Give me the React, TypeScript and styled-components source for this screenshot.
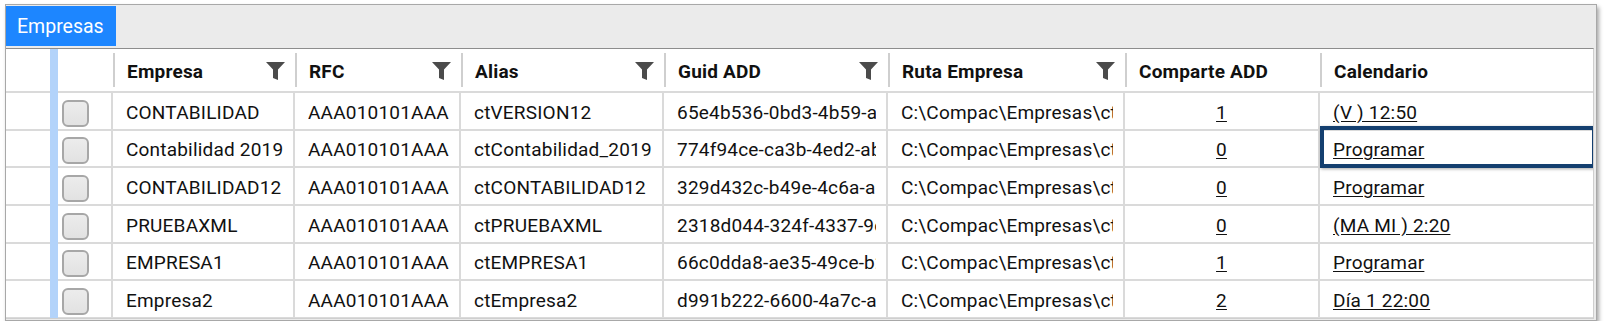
import React from 'react';
import styled, { createGlobalStyle, css } from 'styled-components';

const GlobalStyle = createGlobalStyle`
  html, body {
    margin: 0;
    padding: 0;
    background: #ffffff;
  }
  body {
    font-family: Roboto, "Liberation Sans", Arial, sans-serif;
    color: #111111;
  }
`;

const Frame = styled.div`
  box-sizing: border-box;
  margin: 4px 0 0 5px;
  width: 1592px;
  height: 317px;
  background: #ebebeb;
  border: 1px solid #a8a8a8;
  box-shadow: 2px 3px 4px rgba(0, 0, 0, 0.35);
  display: flex;
  flex-direction: column;
`;

const TabBar = styled.div`
  height: 43px;
  flex: none;
  display: flex;
  align-items: flex-start;
`;

const Tab = styled.div`
  margin-top: 1px;
  height: 40px;
  padding: 0 12px 0 11px;
  display: flex;
  align-items: center;
  background: #1d86ff;
  color: #ffffff;
  font-size: 19.5px;
`;

const GridWrap = styled.div`
  flex: 1;
  min-height: 0;
  margin: 0 2px 1px 0;
  background: #ffffff;
  border-top: 1px solid #8d8d8d;
  border-right: 1px solid #cfcfcf;
  border-bottom: 1px solid #cfcfcf;
  overflow: hidden;
`;

const Table = styled.table`
  table-layout: fixed;
  border-collapse: separate;
  border-spacing: 0;
  width: 1587px;
  font-size: 19px;
  letter-spacing: 0.2px;
`;

const HeadRow = styled.tr`
  height: 44px;
`;

const BodyRow = styled.tr`
  height: 37.67px;
`;

const Th = styled.th<{ $bar?: boolean }>`
  padding: 0;
  text-align: left;
  font-weight: 700;
  border-bottom: 2px solid ${p => (p.$bar ? '#b3d3fa' : '#dadada')};
  background: ${p => (p.$bar ? '#b3d3fa' : '#ffffff')};
`;

const HeadInner = styled.div`
  height: 32px;
  display: flex;
  align-items: center;
  justify-content: space-between;
  border-left: 2px solid #cfcfcf;
  padding: 2px 10px 0 12px;
  white-space: nowrap;
  overflow: hidden;
`;

const Td = styled.td<{ $kind?: 'plain' | 'bar' | 'check' | 'center'; $selected?: boolean }>`
  padding: 3px 10px 0 13px;
  border-bottom: 2px solid #dadada;
  border-right: 2px solid #dadada;
  vertical-align: middle;
  ${p =>
    p.$kind === 'plain' &&
    css`
      border-right: none;
      padding: 0;
    `}
  ${p =>
    p.$kind === 'bar' &&
    css`
      padding: 0;
      border-right: none;
      background: #b3d3fa;
      border-bottom-color: #b3d3fa;
    `}
  ${p =>
    p.$kind === 'check' &&
    css`
      padding: 5px 0 0 4px;
    `}
  ${p =>
    p.$kind === 'center' &&
    css`
      text-align: center;
      padding: 3px 0 0;
    `}
  ${p =>
    p.$selected &&
    css`
      position: relative;
      &::after {
        content: '';
        position: absolute;
        top: -5px;
        left: 0;
        right: -3px;
        bottom: -2px;
        border: 4px solid #143f6f;
        box-shadow: 1px 1px 3px rgba(0, 0, 0, 0.35);
        pointer-events: none;
      }
    `}
`;

const LastTd = styled(Td)`
  border-right: none;
`;

const CellText = styled.div`
  white-space: nowrap;
  overflow: hidden;
`;

const Check = styled.span`
  display: block;
  box-sizing: border-box;
  width: 27px;
  height: 27px;
  border: 2px solid #a7a7a7;
  border-radius: 6px;
  background: linear-gradient(#ececec, #e2e2e2);
`;

const Link = styled.a`
  color: #111111;
  text-decoration: underline;
  text-underline-offset: 2px;
  cursor: pointer;
`;

const FilterIcon: React.FC = () => (
  <svg width="19" height="18" viewBox="0 0 19 18" aria-hidden="true">
    <path d="M0 0 H19 L12 7.5 V18 L7 16 V7.5 Z" fill="#4b4b4b" />
  </svg>
);

type Row = {
  empresa: string;
  rfc: string;
  alias: string;
  guid: string;
  ruta: string;
  comparte: string;
  calendario: string;
};

const rows: Row[] = [
  {
    empresa: 'CONTABILIDAD',
    rfc: 'AAA010101AAA',
    alias: 'ctVERSION12',
    guid: '65e4b536-0bd3-4b59-a7d2-3f1c9e0b4a21',
    ruta: 'C:\\Compac\\Empresas\\ctVERSION12',
    comparte: '1',
    calendario: '(V ) 12:50',
  },
  {
    empresa: 'Contabilidad 2019',
    rfc: 'AAA010101AAA',
    alias: 'ctContabilidad_2019',
    guid: '774f94ce-ca3b-4ed2-ab41-9c2e7d5f0a13',
    ruta: 'C:\\Compac\\Empresas\\ctContabilidad_2019',
    comparte: '0',
    calendario: 'Programar',
  },
  {
    empresa: 'CONTABILIDAD12',
    rfc: 'AAA010101AAA',
    alias: 'ctCONTABILIDAD12',
    guid: '329d432c-b49e-4c6a-a0f3-5b8e1d7c2e90',
    ruta: 'C:\\Compac\\Empresas\\ctCONTABILIDAD12',
    comparte: '0',
    calendario: 'Programar',
  },
  {
    empresa: 'PRUEBAXML',
    rfc: 'AAA010101AAA',
    alias: 'ctPRUEBAXML',
    guid: '2318d044-324f-4337-9e1a-6c0d4b8f2a57',
    ruta: 'C:\\Compac\\Empresas\\ctPRUEBAXML',
    comparte: '0',
    calendario: '(MA MI ) 2:20',
  },
  {
    empresa: 'EMPRESA1',
    rfc: 'AAA010101AAA',
    alias: 'ctEMPRESA1',
    guid: '66c0dda8-ae35-49ce-b2d7-1e9f4a3c6b08',
    ruta: 'C:\\Compac\\Empresas\\ctEMPRESA1',
    comparte: '1',
    calendario: 'Programar',
  },
  {
    empresa: 'Empresa2',
    rfc: 'AAA010101AAA',
    alias: 'ctEmpresa2',
    guid: 'd991b222-6600-4a7c-a5e8-0f2b7d9c1e46',
    ruta: 'C:\\Compac\\Empresas\\ctEmpresa2',
    comparte: '2',
    calendario: 'Día 1 22:00',
  },
];

const widths = [44, 8, 55, 182, 166, 203, 224, 237, 195, 273];

const columns: { label: string; filter: boolean }[] = [
  { label: 'Empresa', filter: true },
  { label: 'RFC', filter: true },
  { label: 'Alias', filter: true },
  { label: 'Guid ADD', filter: true },
  { label: 'Ruta Empresa', filter: true },
  { label: 'Comparte ADD', filter: false },
  { label: 'Calendario', filter: false },
];

export default function App() {
  return (
    <>
      <GlobalStyle />
      <Frame>
        <TabBar>
          <Tab>Empresas</Tab>
        </TabBar>
        <GridWrap>
          <Table>
            <colgroup>
              {widths.map((w, i) => (
                <col key={i} style={{ width: w }} />
              ))}
            </colgroup>
            <thead>
              <HeadRow>
                <Th />
                <Th $bar />
                <Th />
                {columns.map(c => (
                  <Th key={c.label}>
                    <HeadInner>
                      <span>{c.label}</span>
                      {c.filter && <FilterIcon />}
                    </HeadInner>
                  </Th>
                ))}
              </HeadRow>
            </thead>
            <tbody>
              {rows.map((r, i) => (
                <BodyRow key={r.alias}>
                  <Td $kind="plain" />
                  <Td $kind="bar" />
                  <Td $kind="check">
                    <Check />
                  </Td>
                  <Td>
                    <CellText>{r.empresa}</CellText>
                  </Td>
                  <Td>
                    <CellText>{r.rfc}</CellText>
                  </Td>
                  <Td>
                    <CellText>{r.alias}</CellText>
                  </Td>
                  <Td>
                    <CellText>{r.guid}</CellText>
                  </Td>
                  <Td>
                    <CellText>{r.ruta}</CellText>
                  </Td>
                  <Td $kind="center">
                    <Link>{r.comparte}</Link>
                  </Td>
                  <LastTd $selected={i === 1}>
                    <CellText>
                      <Link>{r.calendario}</Link>
                    </CellText>
                  </LastTd>
                </BodyRow>
              ))}
            </tbody>
          </Table>
        </GridWrap>
      </Frame>
    </>
  );
}
